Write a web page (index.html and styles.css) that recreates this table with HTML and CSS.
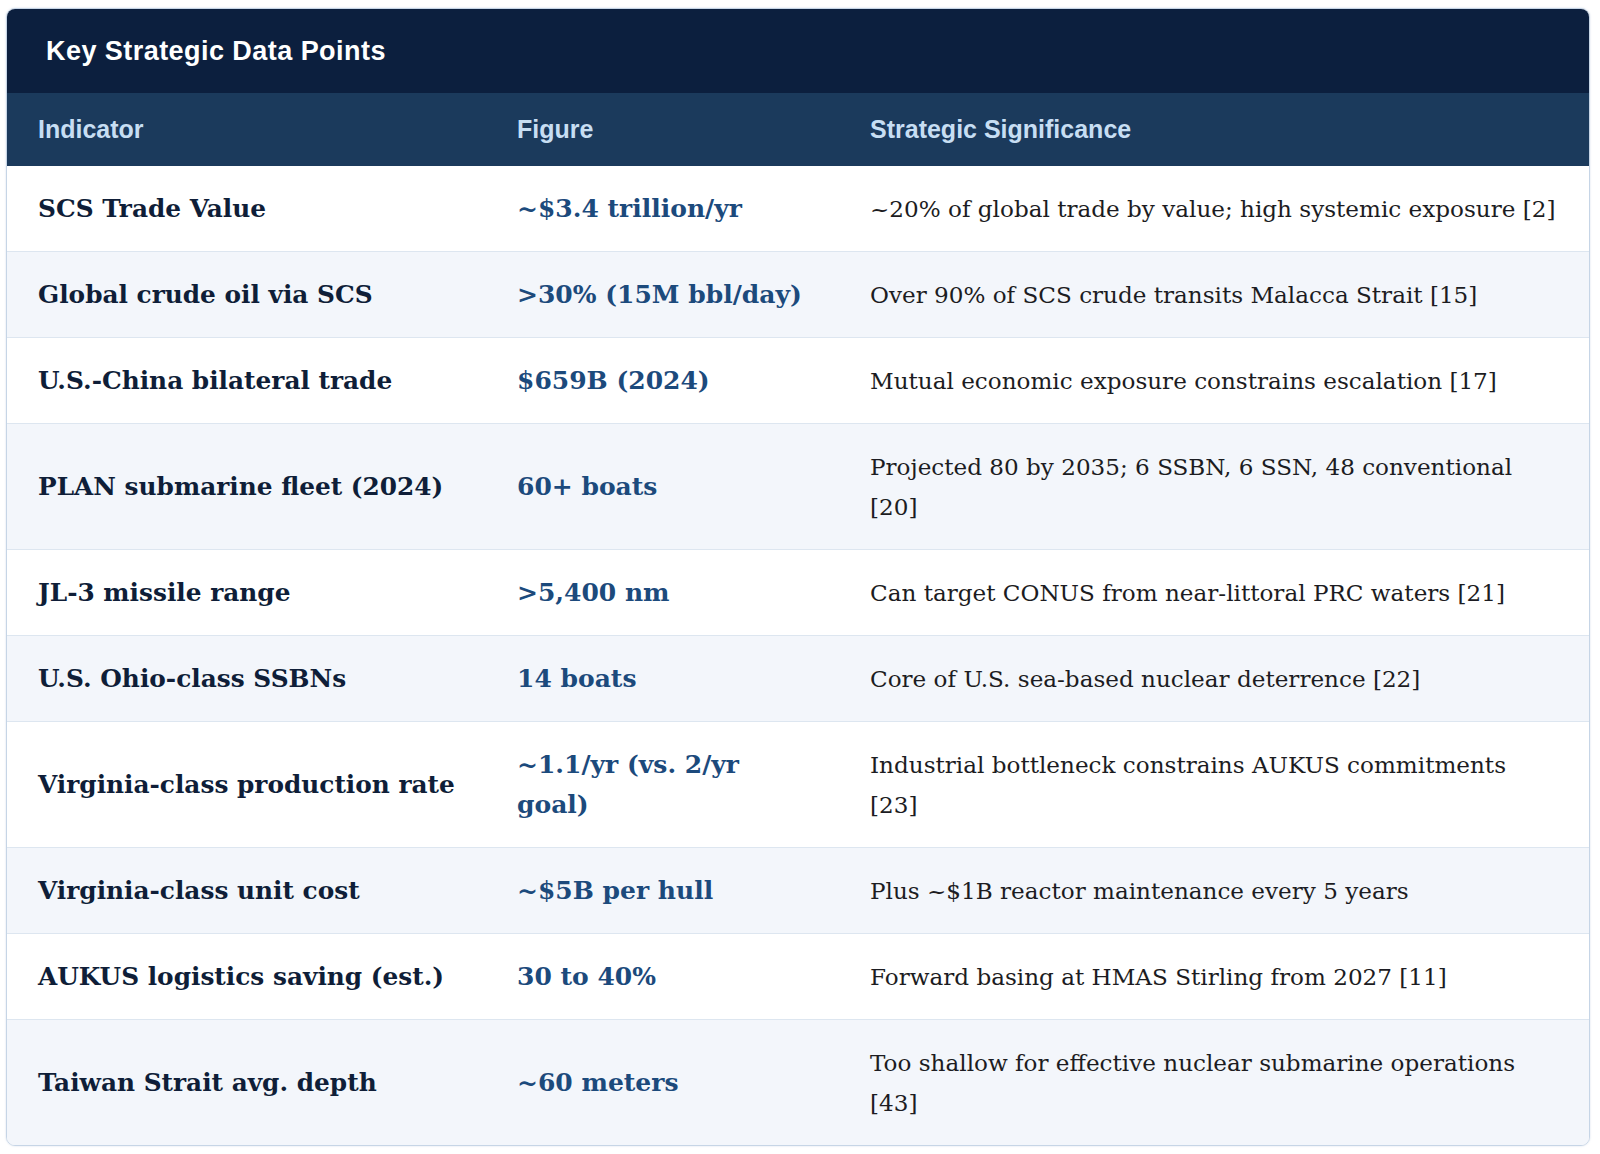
FILE: index.html
```html
<!DOCTYPE html>
<html lang="en">
<head>
<meta charset="utf-8">
<title>Key Strategic Data Points</title>
<link rel="stylesheet" href="styles.css">
</head>
<body>
<div class="card">
  <div class="card-title">Key Strategic Data Points</div>
  <table class="data">
    <colgroup>
      <col class="c1"><col class="c2"><col class="c3">
    </colgroup>
    <thead>
      <tr><th>Indicator</th><th>Figure</th><th>Strategic Significance</th></tr>
    </thead>
    <tbody>
      <tr><td class="ind">SCS Trade Value</td><td class="fig">~$3.4 trillion/yr</td><td class="sig">~20% of global trade by value; high systemic exposure [2]</td></tr>
      <tr><td class="ind">Global crude oil via SCS</td><td class="fig">&gt;30% (15M bbl/day)</td><td class="sig">Over 90% of SCS crude transits Malacca Strait [15]</td></tr>
      <tr><td class="ind">U.S.-China bilateral trade</td><td class="fig">$659B (2024)</td><td class="sig">Mutual economic exposure constrains escalation [17]</td></tr>
      <tr><td class="ind">PLAN submarine fleet (2024)</td><td class="fig">60+ boats</td><td class="sig">Projected 80 by 2035; 6 SSBN, 6 SSN, 48 conventional [20]</td></tr>
      <tr><td class="ind">JL-3 missile range</td><td class="fig">&gt;5,400 nm</td><td class="sig">Can target CONUS from near-littoral PRC waters [21]</td></tr>
      <tr><td class="ind">U.S. Ohio-class SSBNs</td><td class="fig">14 boats</td><td class="sig">Core of U.S. sea-based nuclear deterrence [22]</td></tr>
      <tr><td class="ind">Virginia-class production rate</td><td class="fig">~1.1/yr (vs. 2/yr goal)</td><td class="sig">Industrial bottleneck constrains AUKUS commitments [23]</td></tr>
      <tr><td class="ind">Virginia-class unit cost</td><td class="fig">~$5B per hull</td><td class="sig">Plus ~$1B reactor maintenance every 5 years</td></tr>
      <tr><td class="ind">AUKUS logistics saving (est.)</td><td class="fig">30 to 40%</td><td class="sig">Forward basing at HMAS Stirling from 2027 [11]</td></tr>
      <tr><td class="ind">Taiwan Strait avg. depth</td><td class="fig">~60 meters</td><td class="sig">Too shallow for effective nuclear submarine operations [43]</td></tr>
    </tbody>
  </table>
</div>
</body>
</html>
```

FILE: styles.css
```css
html, body {
  margin: 0;
  padding: 0;
  background: #ffffff;
}
body {
  padding: 8px 10px 9px 6px;
}
.card {
  width: 1584px;
  box-sizing: border-box;
  border: 1px solid #c6d5e6;
  border-radius: 9px;
  overflow: hidden;
  box-shadow: 0 0 2px rgba(120, 150, 190, 0.35);
}
.card-title {
  background: #0c1f3e;
  color: #ffffff;
  font-family: "Liberation Sans", Arial, sans-serif;
  font-weight: bold;
  font-size: 27px;
  letter-spacing: 0.45px;
  height: 84px;
  line-height: 84px;
  padding-left: 39px;
}
.data {
  width: 100%;
  border-collapse: collapse;
  table-layout: fixed;
}
.c1 { width: 479px; }
.c2 { width: 353px; }
.c3 { width: auto; }
.data th {
  background: #1b3a5c;
  color: #c7def3;
  font-family: "Liberation Sans", Arial, sans-serif;
  font-weight: bold;
  font-size: 25px;
  text-align: left;
  height: 73px;
  padding: 0 31px;
  box-sizing: border-box;
}
.data td {
  padding: 22.5px 31px;
  font-family: "DejaVu Serif", Georgia, serif;
  line-height: 40px;
  border-top: 1px solid #dde6f0;
  vertical-align: middle;
}
.data tbody tr:first-child td {
  border-top: none;
}
.data tbody tr:nth-child(even) td {
  background: #f3f6fb;
}
.ind {
  font-weight: bold;
  font-size: 24.8px;
  color: #0f1e38;
}
.data td.ind {
  padding-right: 16px;
}
.fig {
  font-weight: bold;
  font-size: 25px;
  color: #1c4a7c;
}
.sig {
  font-size: 23.1px;
  color: #1c1c22;
}
```
